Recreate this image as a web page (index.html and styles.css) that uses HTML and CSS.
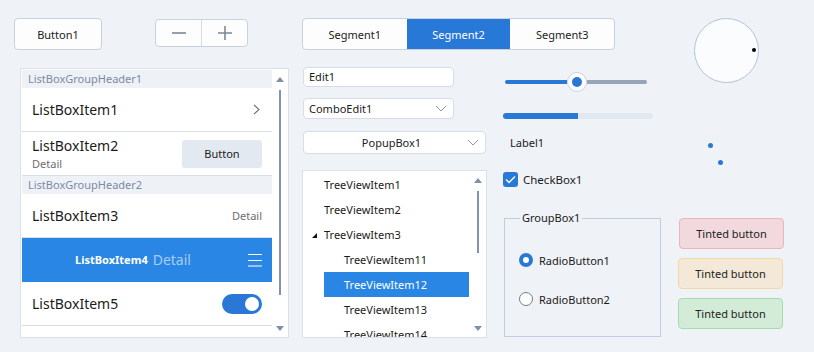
FILE: index.html
```html
<!DOCTYPE html>
<html lang="en">

<head>
    <meta charset="UTF-8" />
    <title>Controls</title>
    <link rel="stylesheet" href="styles.css">
</head>

<body>

    <div class="form">

        <!-- left column -->
        <div class="col-left">
            <div class="top-row">
                <button class="btn btn-main">Button1</button>
                <div class="stepper">
                    <span class="step">
                        <svg width="14" height="14" viewBox="0 0 14 14"><path d="M0 7H14" stroke="#7b879b" stroke-width="1.6" /></svg>
                    </span>
                    <span class="step">
                        <svg width="14" height="14" viewBox="0 0 14 14"><path d="M0 7H14M7 0V14" stroke="#7b879b" stroke-width="1.6" /></svg>
                    </span>
                </div>
            </div>

            <div class="listbox">
                <div class="lb-items">
                    <div class="lb-header">ListBoxGroupHeader1</div>
                    <div class="lb-item">
                        <span class="lb-text">ListBoxItem1</span>
                        <svg class="lb-chevron" width="7" height="11" viewBox="0 0 7 11"><path d="M1 1L6 5.5L1 10" fill="none" stroke="#6b7689" stroke-width="1.2" /></svg>
                    </div>
                    <div class="lb-item">
                        <div class="lb-two">
                            <span class="lb-text">ListBoxItem2</span>
                            <span class="lb-sub">Detail</span>
                        </div>
                        <button class="btn btn-soft">Button</button>
                    </div>
                    <div class="lb-header">ListBoxGroupHeader2</div>
                    <div class="lb-item">
                        <span class="lb-text">ListBoxItem3</span>
                        <span class="lb-detail">Detail</span>
                    </div>
                    <div class="lb-item selected">
                        <span class="lb-bold">ListBoxItem4</span>
                        <span class="lb-light">Detail</span>
                        <svg class="lb-menu" width="14" height="14" viewBox="0 0 14 14"><path d="M0 1.5H14M0 7.5H14M0 13H14" stroke="#fff" stroke-width="1" /></svg>
                    </div>
                    <div class="lb-item">
                        <span class="lb-text">ListBoxItem5</span>
                        <span class="toggle"><span class="toggle-knob"></span></span>
                    </div>
                </div>
                <div class="scrollbar">
                    <span class="sb-up"></span>
                    <span class="sb-thumb lb-thumb"></span>
                    <span class="sb-down"></span>
                </div>
            </div>
        </div>

        <!-- middle -->
        <div class="col-mid">
            <div class="segments">
                <span class="seg">Segment1</span>
                <span class="seg active">Segment2</span>
                <span class="seg">Segment3</span>
            </div>

            <div class="mid-row">
                <div class="col-inputs">
                    <div class="edit">Edit1</div>
                    <div class="edit combo">
                        <span>ComboEdit1</span>
                        <svg width="12" height="7" viewBox="0 0 12 7"><path d="M1 1L6 6L11 1" fill="none" stroke="#8b97a8" stroke-width="1" /></svg>
                    </div>
                    <div class="popup">
                        <span class="popup-text">PopupBox1</span>
                        <svg width="12" height="7" viewBox="0 0 12 7"><path d="M1 1L6 6L11 1" fill="none" stroke="#8b97a8" stroke-width="1" /></svg>
                    </div>

                    <div class="tree">
                        <div class="tree-items">
                            <div class="tv-row">TreeViewItem1</div>
                            <div class="tv-row">TreeViewItem2</div>
                            <div class="tv-row has-child"><span class="tv-arrow"></span>TreeViewItem3</div>
                            <div class="tv-row child">TreeViewItem11</div>
                            <div class="tv-row child selected">TreeViewItem12</div>
                            <div class="tv-row child">TreeViewItem13</div>
                            <div class="tv-row child">TreeViewItem14</div>
                        </div>
                        <div class="scrollbar">
                            <span class="sb-up"></span>
                            <span class="sb-thumb tv-thumb"></span>
                            <span class="sb-down"></span>
                        </div>
                    </div>
                </div>

                <div class="col-controls">
                    <div class="slider">
                        <span class="slider-fill"></span>
                        <span class="slider-thumb"><span class="slider-dot"></span></span>
                        <span class="slider-rest"></span>
                    </div>
                    <div class="progress"><span class="progress-fill"></span></div>
                    <div class="label">Label1</div>
                    <label class="check">
                        <span class="check-box">
                            <svg width="11" height="9" viewBox="0 0 11 9"><path d="M1 4.5L4 7.5L10 1.5" fill="none" stroke="#fff" stroke-width="1.3" /></svg>
                        </span>
                        CheckBox1
                    </label>
                    <fieldset class="group">
                        <legend>GroupBox1</legend>
                        <div class="radio"><span class="radio-dot on"></span>RadioButton1</div>
                        <div class="radio"><span class="radio-dot"></span>RadioButton2</div>
                    </fieldset>
                </div>
            </div>
        </div>

        <!-- right column -->
        <div class="col-right">
            <div class="knob"><span class="knob-mark"></span></div>
            <div class="dots">
                <span class="dot d1"></span>
                <span class="dot d2"></span>
            </div>
            <div class="tinted">
                <button class="btn tint red">Tinted button</button>
                <button class="btn tint orange">Tinted button</button>
                <button class="btn tint green">Tinted button</button>
            </div>
        </div>

    </div>

</body>

</html>
```

FILE: styles.css
```css
html,
body {
    margin: 0;
    padding: 0;
    width: 814px;
    height: 352px;
    overflow: hidden;
    background-color: #eff2f6;
    color: #1b1b1b;
    font-family: "Noto Sans", "Open Sans", sans-serif;
    font-size: 11px;
}

.form {
    display: flex;
    padding: 18px 0 0 14px;
}

/* 공통 버튼 */
.btn {
    font-family: inherit;
    font-size: 11px;
    color: #1b1b1b;
    background: #fdfdfe;
    border: 1px solid #c8d2df;
    border-radius: 4px;
    padding: 0;
    display: flex;
    align-items: center;
    justify-content: center;
}

/* 왼쪽 */
.col-left {
    width: 275px;
    display: flex;
    flex-direction: column;
}

.top-row {
    display: flex;
    align-items: flex-start;
}

.btn-main {
    width: 88px;
    height: 32px;
}

.stepper {
    display: flex;
    margin: 1px 0 0 53px;
    height: 28px;
    width: 93px;
    box-sizing: border-box;
    border: 1px solid #c8d2df;
    border-radius: 4px;
    background: #fdfdfe;
}

.step {
    flex: 1;
    display: flex;
    align-items: center;
    justify-content: center;
}

.step + .step {
    border-left: 1px solid #d3dbe6;
}

.listbox {
    margin: 18px 0 0 6px;
    width: 269px;
    height: 270px;
    box-sizing: border-box;
    border: 1px solid #dae1ea;
    background: #fff;
    display: flex;
    padding: 1px 0 0 1px;
    overflow: hidden;
}

.lb-items {
    width: 250px;
    flex: none;
}

.lb-header {
    height: 18px;
    line-height: 18px;
    background: #eef2f6;
    color: #7c8aa3;
    padding-left: 6px;
}

.lb-item {
    height: 43px;
    border-bottom: 1px solid #d6dee8;
    display: flex;
    align-items: center;
    padding: 0 10px;
}

.lb-text {
    font-size: 14px;
    flex: 1;
}

.lb-chevron {
    margin-right: 2px;
}

.lb-two {
    flex: 1;
    display: flex;
    flex-direction: column;
}

.lb-two .lb-text {
    line-height: 20px;
}

.lb-sub {
    color: #6f6f6f;
    line-height: 16px;
}

.btn-soft {
    width: 80px;
    height: 28px;
    background: #e3e9f0;
    border: none;
    border-radius: 3px;
}

.lb-detail {
    color: #6f6f6f;
}

.lb-item.selected {
    background: #2a86e4;
    border-bottom-color: #2a86e4;
    color: #fff;
    padding-left: 53px;
}

.lb-bold {
    font-weight: bold;
}

.lb-light {
    font-size: 14px;
    color: #a6cdf5;
    margin-left: 5px;
    flex: 1;
}

.toggle {
    width: 40px;
    height: 20px;
    border-radius: 10px;
    background: #2a78d6;
    display: flex;
    align-items: center;
    justify-content: flex-end;
    padding-right: 3px;
    box-sizing: border-box;
}

.toggle-knob {
    width: 14px;
    height: 14px;
    border-radius: 50%;
    background: #fff;
}

/* 스크롤바 */
.scrollbar {
    flex: 1;
    display: flex;
    flex-direction: column;
    align-items: center;
}

.sb-up {
    margin-top: 7px;
    border-left: 4px solid transparent;
    border-right: 4px solid transparent;
    border-bottom: 5px solid #8090a8;
}

.sb-down {
    margin-top: auto;
    margin-bottom: 6px;
    border-left: 4px solid transparent;
    border-right: 4px solid transparent;
    border-top: 5px solid #8090a8;
}

.sb-thumb {
    width: 2px;
    background: #8592a9;
    margin-top: 8px;
}

.lb-thumb {
    height: 205px;
}

/* 가운데 */
.col-mid {
    margin-left: 13px;
    width: 359px;
}

.segments {
    display: flex;
    width: 313px;
    height: 32px;
    box-sizing: border-box;
    border: 1px solid #c8d2df;
    border-radius: 4px;
    background: #fdfdfe;
    overflow: hidden;
}

.seg {
    flex: 1;
    display: flex;
    align-items: center;
    justify-content: center;
}

.seg.active {
    background: #2878d8;
    color: #fff;
}

.mid-row {
    display: flex;
}

.col-inputs {
    width: 185px;
    display: flex;
    flex-direction: column;
}

.edit {
    margin: 17px 0 0 1px;
    width: 151px;
    height: 20px;
    box-sizing: border-box;
    border: 1px solid #d5dde8;
    border-radius: 4px;
    background: #fff;
    padding-left: 5px;
    line-height: 18px;
}

.combo {
    margin-top: 11px;
    height: 21px;
    display: flex;
    align-items: center;
    justify-content: space-between;
    padding-right: 6px;
}

.popup {
    margin: 12px 0 0 1px;
    width: 183px;
    height: 23px;
    box-sizing: border-box;
    border: 1px solid #d5dde8;
    border-radius: 4px;
    background: #fff;
    display: flex;
    align-items: center;
    padding-right: 6px;
}

.popup-text {
    flex: 1;
    text-align: center;
    padding-left: 12px;
}

.tree {
    margin-top: 16px;
    width: 185px;
    height: 168px;
    box-sizing: border-box;
    border: 1px solid #dae1ea;
    background: #fff;
    display: flex;
    overflow: hidden;
}

.tree-items {
    width: 167px;
    flex: none;
    padding-top: 1px;
}

.tv-row {
    height: 25px;
    line-height: 25px;
    padding-left: 21px;
    position: relative;
}

.tv-row.child {
    padding-left: 41px;
}

.tv-row.selected {
    margin-left: 21px;
    padding-left: 20px;
    width: 125px;
    background: #2a86e4;
    color: #fff;
}

.tv-arrow {
    position: absolute;
    left: 9px;
    top: 11px;
    border-left: 5px solid transparent;
    border-bottom: 5px solid #111;
}

.tv-thumb {
    height: 62px;
}

.col-controls {
    margin-left: 16px;
    width: 158px;
    display: flex;
    flex-direction: column;
    align-items: flex-start;
}

.slider {
    margin: 22px 0 0 2px;
    width: 142px;
    height: 20px;
    display: flex;
    align-items: center;
}

.slider-fill {
    width: 62px;
    height: 4px;
    border-radius: 2px 0 0 2px;
    background: #2a78d6;
}

.slider-rest {
    flex: 1;
    height: 4px;
    border-radius: 0 2px 2px 0;
    background: #97a4b8;
}

.slider-thumb {
    width: 20px;
    height: 20px;
    box-sizing: border-box;
    border: 1px solid #c7d2e0;
    border-radius: 50%;
    background: #fff;
    display: flex;
    align-items: center;
    justify-content: center;
}

.slider-dot {
    width: 10px;
    height: 10px;
    border-radius: 50%;
    background: #2a78d6;
}

.progress {
    margin-top: 21px;
    width: 150px;
    height: 6px;
    border-radius: 3px;
    background: #e2e8f0;
    overflow: hidden;
}

.progress-fill {
    display: block;
    width: 75px;
    height: 6px;
    background: #2a78d6;
}

.label {
    margin: 16px 0 0 7px;
    line-height: 16px;
}

.check {
    margin-top: 21px;
    display: flex;
    align-items: center;
    gap: 5px;
    font-size: 11.5px;
}

.check-box {
    width: 15px;
    height: 15px;
    border-radius: 3px;
    background: #2a78d6;
    display: flex;
    align-items: center;
    justify-content: center;
}

.group {
    margin: 23px 0 0 1px;
    width: 157px;
    height: 127px;
    box-sizing: border-box;
    border: 1px solid #bfcde0;
    padding: 0 0 0 14px;
}

.group legend {
    padding: 0 2px;
    margin-left: 1px;
    line-height: 16px;
}

.radio {
    display: flex;
    align-items: center;
    gap: 6px;
    margin-top: 26px;
    height: 16px;
}

.radio + .radio {
    margin-top: 23px;
}

.radio-dot {
    width: 14px;
    height: 14px;
    box-sizing: border-box;
    border-radius: 50%;
    border: 1px solid #6f7c92;
    background: #fff;
}

.radio-dot.on {
    border: 4px solid #2a78d6;
}

/* 오른쪽 */
.col-right {
    margin-left: 17px;
    width: 107px;
    display: flex;
    flex-direction: column;
}

.knob {
    margin-left: 16px;
    width: 65px;
    height: 65px;
    box-sizing: border-box;
    border: 1px solid #b5c4d8;
    border-radius: 50%;
    background: #fbfcfe;
    position: relative;
}

.knob-mark {
    position: absolute;
    left: 57px;
    top: 29px;
    width: 4px;
    height: 4px;
    border-radius: 50%;
    background: #000;
}

.dots {
    display: flex;
    flex-direction: column;
}

.dot {
    width: 5px;
    height: 5px;
    border-radius: 50%;
    background: #2a78d6;
}

.d1 {
    margin: 60px 0 0 30px;
}

.d2 {
    margin: 12px 0 0 40px;
}

.tinted {
    margin-top: 53px;
    display: flex;
    flex-direction: column;
    gap: 9px;
}

.tint {
    width: 105px;
    height: 31px;
    color: #222;
}

.red {
    margin-left: 1px;
    background: #f1d9dd;
    border-color: #ebb5bb;
}

.orange {
    background: #f4e9d8;
    border-color: #f3d8a2;
}

.green {
    background: #d3ecd7;
    border-color: #a4dcab;
}
```
